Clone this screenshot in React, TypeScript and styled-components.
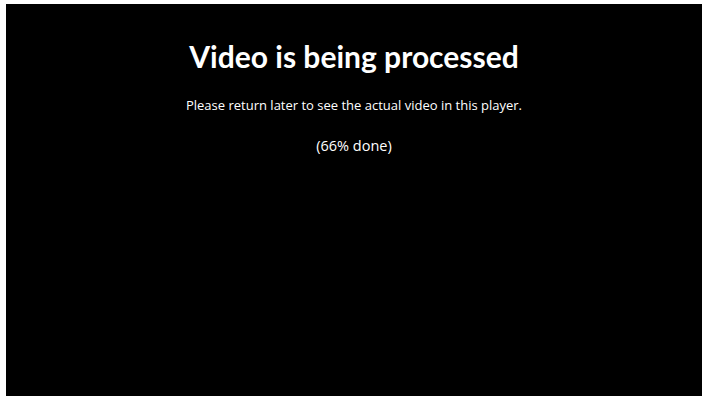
import React from "react";
import styled, { createGlobalStyle } from "styled-components";

const GlobalStyle = createGlobalStyle`
  html, body { margin: 0; padding: 0; background: #ffffff; }
`;

const Player = styled.div`
  margin: 4px 8px 8px 6px;
  width: 696px;
  height: 392px;
  background: #000000;
  display: flex;
  flex-direction: column;
  align-items: center;
  padding-top: 34px;
  box-sizing: border-box;
  color: #ffffff;
`;

const Title = styled.h1`
  margin: 0;
  font-family: "Lato", sans-serif;
  font-weight: 700;
  font-size: 30px;
  line-height: 36px;
`;

const Message = styled.p<{ $gap: number; $size: number; $lh: number }>`
  margin: ${(p) => p.$gap}px 0 0;
  font-family: "Open Sans", sans-serif;
  font-size: ${(p) => p.$size}px;
  line-height: ${(p) => p.$lh}px;
`;

export default function App() {
  return (
    <>
      <GlobalStyle />
      <Player>
        <Title>Video is being processed</Title>
        <Message $gap={22} $size={13} $lh={18}>
          Please return later to see the actual video in this player.
        </Message>
        <Message $gap={22} $size={14.5} $lh={20}>
          (66% done)
        </Message>
      </Player>
    </>
  );
}
